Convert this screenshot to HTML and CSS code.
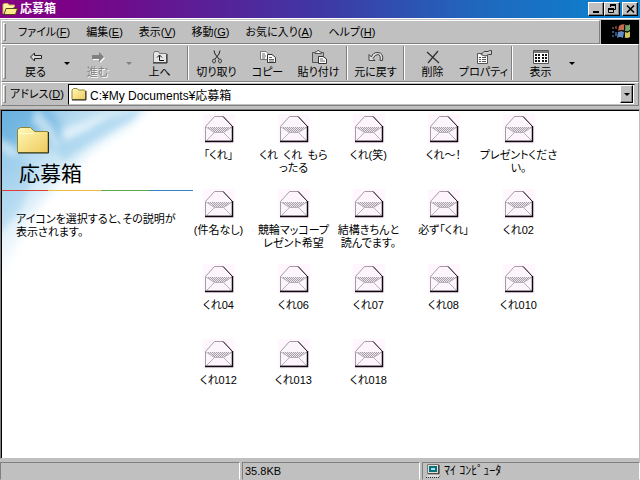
FILE: index.html
```html
<!DOCTYPE html>
<html lang="ja">
<head>
<meta charset="utf-8">
<title>応募箱</title>
<link rel="stylesheet" href="styles.css">
</head>
<body>
<svg class="defs" aria-hidden="true">
  <defs>
    <linearGradient id="fold" x1="0" y1="0" x2="1" y2="1"><stop offset="0" stop-color="#fffab8"/><stop offset="1" stop-color="#efc95c"/></linearGradient>
    <pattern id="dots" width="2" height="2" patternUnits="userSpaceOnUse"><rect width="2" height="2" fill="#eee6ee"/><path d="M0 0h1v1h-1zM1 1h1v1h-1z" fill="#a8a0a8"/></pattern>
    <symbol id="folder" viewBox="0 0 16 14">
      <path d="M1 12.500V3L2.500 1.500H6L7.500 3H13.500L14.500 4V12.500Z" fill="url(#fold)" stroke="#8c8538"/>
      <path d="M1 13H15V4" fill="none" stroke="#222"/>
    </symbol>
    <symbol id="mail" viewBox="0 0 32 30">
      <rect width="32" height="30" fill="#fff7fd"/>
      <path d="M2.500 27V12.500L11.500 2.500H20.500L29.500 12.500V27Z" fill="#fcf6fc" stroke="#a49ca4"/>
      <path d="M4 13H29L21 18.500H11Z" fill="url(#dots)"/>
      <path d="M3 13L11.500 18.500H20.500L29 13M11.500 18.500L3 27M20.500 18.500L29 27" fill="none" stroke="#b8b0b8"/>
      <path d="M20 2.500L29.500 12.500" fill="none" stroke="#282028"/>
      <path d="M2 27.500H29.500V12" fill="none" stroke="#100810" stroke-width="1.500"/>
    </symbol>
  </defs>
</svg>

<header class="titlebar">
  <svg class="title-icon" viewBox="0 0 16 14" aria-hidden="true"><path d="M1 12V2.500L2 1.500H6L7 3H12.500V5" fill="#fff2a0" stroke="#c9b050"/><path d="M2 12.500L4 6.500H15.500L13.500 12.500Z" fill="#ffe98a" stroke="#554710"/></svg>
  <h1>応募箱</h1>
  <div class="controls">
    <button aria-label="最小化"><svg viewBox="0 0 11 10"><path d="M2 8h6" stroke="#000" stroke-width="2"/></svg></button>
    <button aria-label="元のサイズに戻す"><svg viewBox="0 0 11 10"><path d="M3 1h6M1 5h6" stroke="#000" stroke-width="2"/><path d="M3.500 1V3M8.500 1V5.500H7M1.500 4.500V8.500H6.500V4.500" fill="none" stroke="#000"/></svg></button>
    <button class="close" aria-label="閉じる"><svg viewBox="0 0 11 10"><path d="M2 1.500L9 8.500M9 1.500L2 8.500" stroke="#000" stroke-width="1.600"/></svg></button>
  </div>
</header>

<div class="bars">
  <div class="menurow">
    <nav class="band menu">
      <span class="grip"></span>
      <button>ファイル(<u>F</u>)</button>
      <button>編集(<u>E</u>)</button>
      <button>表示(<u>V</u>)</button>
      <button>移動(<u>G</u>)</button>
      <button>お気に入り(<u>A</u>)</button>
      <button>ヘルプ(<u>H</u>)</button>
    </nav>
    <div class="logo">
      <svg viewBox="0 0 38 23" aria-hidden="true">
        <path d="M18 6Q21 3 25 5L24 11Q21 9 17 11Z" fill="#c56a50"/>
        <path d="M25 5Q28 6 29 4V10Q27 12 24 11Z" fill="#6fa569"/>
        <path d="M17 12Q20 10 23 12L22 18Q19 16 16 18Z" fill="#608cc7"/>
        <path d="M24 12Q27 13 29 11V17Q26 19 23 17Z" fill="#d6c45c"/>
        <path d="M23.500 5V17M17 11.500Q21 9.500 24 11.500T29 10.500" fill="none" stroke="#111"/>
        <path d="M11 7h2v2h-2zM14 6h2v3h-2z" fill="#673b35"/><path d="M11 11h2v2h-2zM11 15h2v2h-2zM14 12h2v4h-2z" fill="#344e76"/>
      </svg>
    </div>
  </div>

  <div class="band toolbar">
    <span class="grip"></span>
    <button class="tool"><svg viewBox="0 0 16 14"><path d="M2.500 7L6.500 3V5.500H13.500V8.500H6.500V11Z" fill="#d8d8d8" stroke="#222"/></svg>戻る</button>
    <button class="arrow" aria-label="戻る履歴"><i></i></button>
    <button class="tool off" disabled><svg viewBox="0 0 16 14"><path d="M15 8L10 13V10H3V7H10V4Z" fill="#fff"/><path d="M14 7L9 2V5H2V9H9V12Z" fill="#808080"/></svg>進む</button>
    <button class="arrow off" disabled aria-label="進む履歴"><i></i></button>
    <button class="tool"><svg viewBox="0 0 16 14"><path d="M1.500 12.500V3.500L2.500 1.500H6.500L7.500 3.500H14.500V12.500Z" fill="#e6e6e6" stroke="#777"/><path d="M1 13H15V4" fill="none" stroke="#222"/><path d="M7.500 5.500V10.500H12M5 7.500L7.500 5L10 7.500" fill="none" stroke="#111"/></svg>上へ</button>
    <span class="sep"></span>
    <button class="tool"><svg viewBox="0 0 16 14"><path d="M5 0.500L6 4L10 9M11 0.500L10 4L6 9" fill="none" stroke="#222"/><ellipse cx="5" cy="11" rx="1.500" ry="2" fill="none" stroke="#444"/><ellipse cx="11" cy="11" rx="1.500" ry="2" fill="none" stroke="#444"/></svg>切り取り</button>
    <button class="tool"><svg viewBox="0 0 16 14"><path d="M.5 1.500H6L8.500 4V9.500H.5Z" fill="#fff" stroke="#777"/><path d="M2 4h3M2 6h4M2 8h3" stroke="#666"/><path d="M7.500 4.500H12L15.500 7.500V12.500H7.500Z" fill="#fff" stroke="#333"/><path d="M9 7.500h3M9 9.500h5M9 11h5" stroke="#666"/></svg>コピー</button>
    <button class="tool"><svg viewBox="0 0 16 14"><path d="M1.500 2.500H12.500V12.500H1.500Z" fill="#b5b5b5" stroke="#555"/><path d="M4 3.500V2H5.500L6.500.5H8L9 2H10.500V3.500Z" fill="#eee" stroke="#555"/><path d="M7.500 6.500H12L15.500 9V13.500H7.500Z" fill="#fff" stroke="#333"/><path d="M9 9h3M9 11h5" stroke="#666"/></svg>貼り付け</button>
    <span class="sep"></span>
    <button class="tool"><svg viewBox="0 0 16 14"><path d="M1 4.500V10.500H7L5 8.500Q7 4.500 10 4.500Q13 5 12 10.500H14.500Q16 3 10 2.500Q5 2 3.500 7Z" fill="#ddd" stroke="#444"/></svg>元に戻す</button>
    <span class="sep"></span>
    <button class="tool"><svg viewBox="0 0 16 14"><path d="M2 2L14 13M13 1L3 13" stroke="#333" stroke-width="1.300"/></svg>削除</button>
    <button class="tool"><svg viewBox="0 0 16 14"><path d="M1.500 3.500H11.500V13.500H1.500Z" fill="#fff" stroke="#555"/><path d="M3 7.500h2M6 7.500h4M3 9.500h2M6 9.500h4M3 11.500h2M6 11.500h4" stroke="#555"/><path d="M5 4.500L8 1.500H12L13.500.5H15.500V4.500H12.500L10 6L7.500 5.500Z" fill="#ccc" stroke="#444"/></svg>プロパティ</button>
    <span class="sep"></span>
    <button class="tool"><svg viewBox="0 0 16 14"><path d="M.5.500H15.500V13.500H.5Z" fill="#fff" stroke="#555"/><path d="M1 2h14" stroke="#777" stroke-width="2"/><path d="M2 5h2M5 5h2M9 5h2M12 5h2M2 8h2M5 8h2M9 8h2M12 8h2M2 11h2M5 11h2M9 11h2M12 11h2" stroke="#111" stroke-width="2"/></svg>表示</button>
    <button class="arrow" aria-label="表示方法"><i></i></button>
  </div>

  <div class="band address">
    <span class="grip"></span>
    <label for="path">アドレス(<u>D</u>)</label>
    <div class="combo">
      <svg class="small-folder" aria-hidden="true"><use href="#folder"/></svg>
      <input id="path" type="text" value="C:¥My Documents¥応募箱">
      <button aria-label="アドレス一覧"><i></i></button>
    </div>
  </div>
</div>

<main class="view">
  <aside class="info">
    <svg class="sky" viewBox="0 0 192 190" aria-hidden="true">
      <defs>
        <linearGradient id="air" gradientUnits="userSpaceOnUse" x1="0" y1="0" x2="84" y2="96"><stop offset="0" stop-color="#7cbce4"/><stop offset=".4" stop-color="#b4daf0"/><stop offset=".7" stop-color="#e0f1fa"/><stop offset="1" stop-color="#fff"/></linearGradient>
        <filter id="soft" x="-30%" y="-30%" width="160%" height="160%"><feGaussianBlur stdDeviation="5"/></filter>
        <filter id="wisp" x="-30%" y="-30%" width="160%" height="160%"><feGaussianBlur stdDeviation="3"/></filter>
      </defs>
      <path d="M-20 -20H165L130 14L92 38L62 66L36 96L12 138L-4 185H-20Z" fill="url(#air)" filter="url(#soft)"/>
      <path d="M-8 -8H42L60 14L54 36L30 26L-8 46Z" fill="#4fa3d8" opacity=".45" filter="url(#soft)"/>
      <path d="M50 36L88 14L140 -4L132 8L86 34L62 50Z" fill="#85c2e8" opacity=".4" filter="url(#wisp)"/>
      <path d="M-6 50L14 44L34 60L18 100L-6 126Z" fill="#85c2e8" opacity=".35" filter="url(#wisp)"/>
      <path d="M34 -4L52 18L58 40L46 28L30 10ZM-4 26L10 34L16 46L-4 40ZM60 18L110 2L86 20L64 30Z" fill="#fff" opacity=".5" filter="url(#wisp)"/>
    </svg>
    <div class="info-body">
      <svg class="big-folder" viewBox="0 0 32 28" aria-hidden="true"><path d="M.5 26V3.500L3.500 1.500H13.500L17.500 5.500H30.500L31 7V26.500H1Z" fill="url(#fold)" stroke="#8c8538"/><path d="M1 27H31.500V6" fill="none" stroke="#2e2c12"/><path d="M2 7.500H15L17 6.500" fill="none" stroke="#fffbd0"/></svg>
      <h2>応募箱</h2>
      <div class="rule"></div>
      <p>アイコンを選択すると、その説明が<br>表示されます。</p>
    </div>
  </aside>
  <ul class="files">
    <li><svg><use href="#mail"/></svg><span>「くれ」</span></li>
    <li><svg><use href="#mail"/></svg><span>くれ&ensp;くれ&ensp;もら<br>ったる</span></li>
    <li><svg><use href="#mail"/></svg><span>くれ(笑)</span></li>
    <li><svg><use href="#mail"/></svg><span>くれ～！</span></li>
    <li><svg><use href="#mail"/></svg><span>プレゼントくださ<br>い。</span></li>
    <li><svg><use href="#mail"/></svg><span>(件名なし)</span></li>
    <li><svg><use href="#mail"/></svg><span>競輪マッコープ<br>レゼント希望</span></li>
    <li><svg><use href="#mail"/></svg><span>結構きちんと<br>読んでます。</span></li>
    <li><svg><use href="#mail"/></svg><span>必ず「くれ」</span></li>
    <li><svg><use href="#mail"/></svg><span>くれ02</span></li>
    <li><svg><use href="#mail"/></svg><span>くれ04</span></li>
    <li><svg><use href="#mail"/></svg><span>くれ06</span></li>
    <li><svg><use href="#mail"/></svg><span>くれ07</span></li>
    <li><svg><use href="#mail"/></svg><span>くれ08</span></li>
    <li><svg><use href="#mail"/></svg><span>くれ010</span></li>
    <li><svg><use href="#mail"/></svg><span>くれ012</span></li>
    <li><svg><use href="#mail"/></svg><span>くれ013</span></li>
    <li><svg><use href="#mail"/></svg><span>くれ018</span></li>
  </ul>
</main>

<footer class="status">
  <div></div>
  <div>35.8KB</div>
  <div class="zone"><svg class="pc" viewBox="0 0 16 14" aria-hidden="true"><path d="M1.500.500H12.500V9.500H1.500Z" fill="#e4e0cc" stroke="#777"/><path d="M13 1V10H2" fill="none" stroke="#222"/><path d="M3 2h8v6h-8z" fill="#087080"/><path d="M5 4h4v2h-4z" fill="#9fe4f0"/><path d="M2 10.500H13L14.500 13H1Z" fill="#ddd"/><path d="M0 13.500H13L14.500 11" fill="none" stroke="#333" stroke-dasharray="1 1"/></svg>ﾏｲ ｺﾝﾋﾟｭｰﾀ</div>
</footer>
</body>
</html>
```
FILE: styles.css
```css
* { box-sizing: border-box; }

body {
  margin: 0;
  height: 100vh;
  display: flex;
  flex-direction: column;
  background: #c0c0c0;
  color: #000;
  font: 11px/14px "Liberation Sans", "Noto Sans CJK JP", sans-serif;
  font-feature-settings: "palt";
  overflow: hidden;
}

button, input {
  font: inherit;
  font-feature-settings: inherit;
  color: inherit;
  border: 0;
  padding: 0;
  margin: 0;
  background: none;
}

svg { display: block; flex: none; }
.defs { position: absolute; width: 0; height: 0; }

.titlebar {
  display: flex;
  align-items: center;
  height: 18px;
  padding: 0 2px;
  background: linear-gradient(90deg, #840083 0%, #7c0086 10%, #3f38a4 50%, #1f68be 75%, #0a84d0 100%);
  color: #fff;
}
.title-icon { width: 16px; height: 14px; }
.titlebar h1 { flex: 1; margin: 0 0 0 2px; font-size: 12px; line-height: 16px; font-weight: bold; }
.controls { display: flex; }
.controls button {
  display: grid;
  place-items: center;
  width: 16px;
  height: 14px;
  background: #c0c0c0;
  border: 1px solid;
  border-color: #fff #000 #000 #fff;
  box-shadow: inset -1px -1px #808080;
}
.controls svg { width: 11px; height: 10px; }
.controls .close { margin-left: 2px; }

.bars { padding: 1px 1px 0 1px; border-top: 1px solid #fff; }
.menurow { display: flex; gap: 1px; }
.band {
  display: flex;
  align-items: center;
  border: 1px solid;
  border-color: #fff #808080 #808080 #fff;
}
.grip {
  align-self: stretch;
  flex: none;
  width: 3px;
  margin: 2px 4px 2px 1px;
  border: 1px solid;
  border-color: #fff #808080 #808080 #fff;
}
.menu { flex: 1; height: 24px; }
.menu button { padding: 0 8px; white-space: nowrap; }
.logo { flex: none; width: 38px; height: 24px; background: #000; }
.logo svg { width: 38px; height: 23px; }

.toolbar { height: 38px; }
.tool {
  flex: 0 0 51px;
  display: flex;
  flex-direction: column;
  align-items: center;
  gap: 1px;
  margin-top: 2px;
  white-space: nowrap;
}
.tool svg { width: 16px; height: 14px; }
.tool.off { color: #808080; text-shadow: 1px 1px #fff; }
.arrow { flex: 0 0 11px; display: grid; place-items: center; }
i { width: 0; height: 0; border: 3px solid transparent; border-top-color: #000; border-bottom: 0; }
.arrow.off i { border-top-color: #808080; }
.sep {
  flex: none;
  align-self: stretch;
  width: 2px;
  margin: 1px 2px;
  border-left: 1px solid #808080;
  border-right: 1px solid #fff;
}

.address { height: 24px; }
.address label { width: 58px; flex: none; white-space: nowrap; }
.combo {
  flex: 1;
  display: flex;
  align-items: center;
  height: 21px;
  padding: 0 1px 0 2px;
  background: #fff;
  border: 1px solid;
  border-color: #000 #c0c0c0 #c0c0c0 #000;
  margin-right: 3px;
}
.small-folder { width: 16px; height: 14px; }
.combo input { flex: 1; min-width: 0; margin-left: 3px; height: 18px; outline: 0; font-size: 12px; }
.combo button {
  display: grid;
  place-items: center;
  width: 13px;
  height: 18px;
  background: #c0c0c0;
  border: 1px solid;
  border-color: #fff #000 #000 #fff;
  box-shadow: inset -1px -1px #808080;
}

.view {
  flex: 1;
  min-height: 0;
  display: flex;
  margin-top: 3px;
  background: #fff;
  border: 1px solid;
  border-color: #808080 #c0c0c0 #c0c0c0 #808080;
  box-shadow: inset 1px 1px #000;
  padding: 1px 0 0 1px;
}
.info { position: relative; flex: 0 0 191px; }
.sky { position: absolute; top: 0; left: 0; width: 192px; height: 190px; }
.info-body { position: relative; padding-top: 15px; }
.big-folder { width: 32px; height: 28px; margin-left: 15px; }
h2 { margin: 8px 0 0 17px; font-size: 21px; line-height: 24px; font-weight: 400; }
.rule {
  height: 1px;
  margin-top: 4px;
  background: linear-gradient(90deg, #df3e32 24%, #e9be40 24% 52%, #5da84b 52% 77%, #3383c4 77%);
}
.info p { margin: 22px 0 0 14px; line-height: 13px; white-space: nowrap; }

.files {
  flex: 1;
  display: grid;
  grid-template-columns: repeat(auto-fill, 75px);
  grid-auto-rows: 75px;
  margin: 3px 0 0 -12px;
  padding: 0 75px 0 0;
  list-style: none;
  align-content: start;
}
.files li { display: flex; flex-direction: column; align-items: center; }
.files svg { width: 32px; height: 30px; }
.files span { margin-top: 5px; line-height: 13px; text-align: center; white-space: nowrap; }

.status { display: grid; grid-template-columns: 240fr 178fr 218fr; gap: 2px; height: 20px; padding-top: 2px; margin-top: 1px; }
.status div {
  display: flex;
  align-items: center;
  gap: 2px;
  padding-left: 2px;
  border: 1px solid;
  border-color: #808080 #fff #c0c0c0 #808080;
}
.status .zone { font-size: 12px; }
.pc { width: 16px; height: 14px; margin-left: 1px; }
```
